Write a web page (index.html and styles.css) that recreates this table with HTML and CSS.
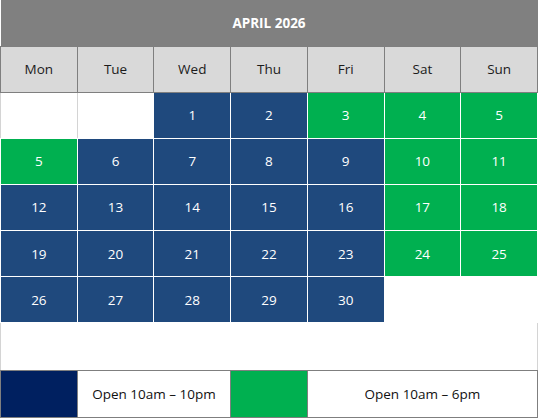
FILE: index.html
```html
<!DOCTYPE html>
<html>
<head>
<meta charset="utf-8">
<link rel="stylesheet" href="styles.css">
</head>
<body>
<table class="cal">
  <tr class="title-row"><th class="title" colspan="7">APRIL 2026</th></tr>
  <tr class="days">
    <th>Mon</th><th>Tue</th><th>Wed</th><th>Thu</th><th>Fri</th><th>Sat</th><th>Sun</th>
  </tr>
  <tr class="week">
    <td class="empty first"></td><td class="empty"></td><td class="b">1</td><td class="b">2</td><td class="g">3</td><td class="g">4</td><td class="g">5</td>
  </tr>
  <tr class="week">
    <td class="g">5</td><td class="b">6</td><td class="b">7</td><td class="b">8</td><td class="b">9</td><td class="g">10</td><td class="g">11</td>
  </tr>
  <tr class="week">
    <td class="b">12</td><td class="b">13</td><td class="b">14</td><td class="b">15</td><td class="b">16</td><td class="g">17</td><td class="g">18</td>
  </tr>
  <tr class="week">
    <td class="b">19</td><td class="b">20</td><td class="b">21</td><td class="b">22</td><td class="b">23</td><td class="g">24</td><td class="g">25</td>
  </tr>
  <tr class="week">
    <td class="b">26</td><td class="b">27</td><td class="b">28</td><td class="b">29</td><td class="b">30</td><td class="blank"></td><td class="blank"></td>
  </tr>
  <tr class="spacer"><td colspan="7"></td></tr>
  <tr class="legend">
    <td class="sw-b"></td>
    <td class="lt" colspan="2">Open 10am – 10pm</td>
    <td class="sw-g"></td>
    <td class="lt" colspan="3">Open 10am – 6pm</td>
  </tr>
</table>
</body>
</html>
```

FILE: styles.css
```css
html, body {
  margin: 0;
  padding: 0;
  background: #fff;
}

.cal {
  width: 538px;
  border-collapse: collapse;
  table-layout: fixed;
  font-family: "Open Sans", "Liberation Sans", sans-serif;
  font-size: 13.5px;
}

.cal th, .cal td {
  padding: 0;
  text-align: center;
  vertical-align: middle;
}

.title-row { height: 46px; }
.title {
  background: #808080;
  color: #fff;
  font-weight: 700;
  font-size: 13.5px;
  border: none;
}

.days { height: 46px; }
.days th {
  background: #d9d9d9;
  color: #1b1b1b;
  font-weight: 400;
  border: 1px solid #7f7f7f;
}

.week { height: 46.2px; }
.week td {
  color: #fff;
  border: 1px solid #fff;
}
.week .b { background: #1f497d; }
.week .g { background: #00b050; }
.week .empty { border-color: #fff; }
.week .empty.first {
  border-left-color: #d4d4d4;
  border-right-color: #d4d4d4;
}
.week .blank { border-color: #fff; }

.spacer { height: 48px; }
.spacer td {
  border-left: 1px solid #d4d4d4;
  border-right: 1px solid #d4d4d4;
  border-top: 1px solid #fff;
  border-bottom: 1px solid #7f7f7f;
}

.legend { height: 47px; }
.legend td {
  border: 1px solid #7f7f7f;
  color: #111;
}
.legend .sw-b { background: #002060; }
.legend .sw-g { background: #00b050; }
.legend .lt { background: #fff; }
```
